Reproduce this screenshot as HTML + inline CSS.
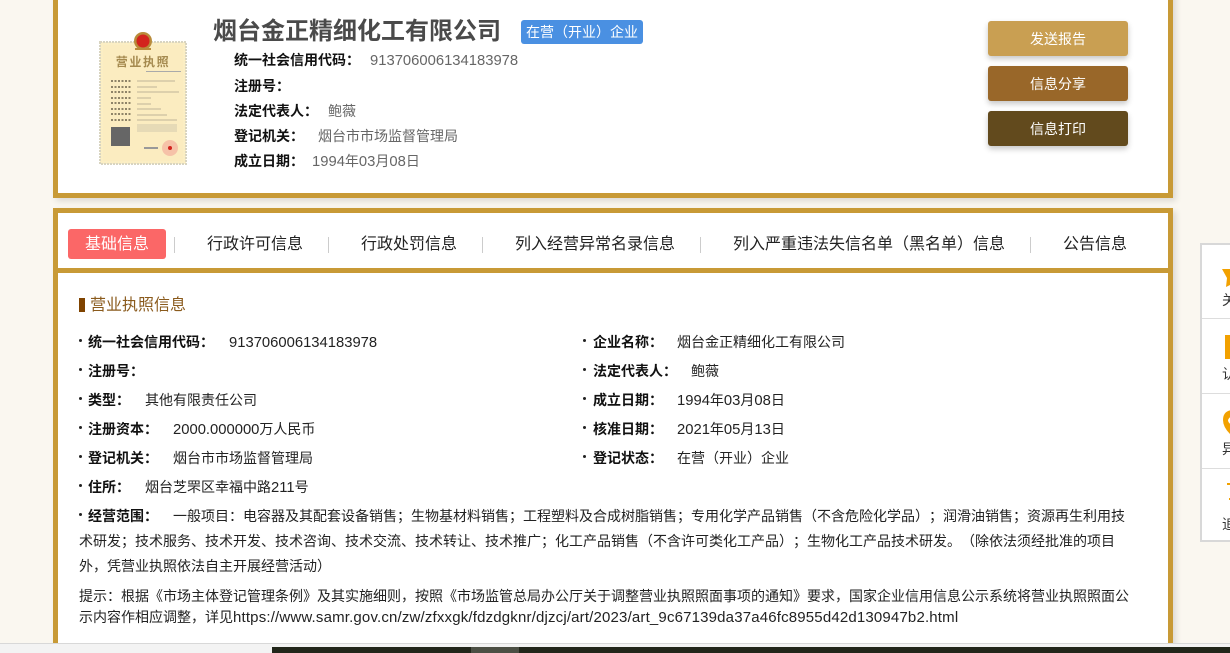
<!DOCTYPE html>
<html lang="zh"><head><meta charset="utf-8"><style>
html,body{margin:0;padding:0;width:1230px;height:653px;overflow:hidden}
body{position:relative;background:#faf7f0;font-family:"Liberation Sans","Noto Sans CJK SC",sans-serif;font-size:14px;color:#222;text-spacing-trim:space-all}
.a{position:absolute;white-space:nowrap;line-height:20px}
.card{position:absolute;left:53px;width:1110px;border:5px solid #c89a36;background:#fff;box-shadow:3px 3px 6px rgba(0,0,0,.12)}
b{font-weight:700;color:#111}
.g{color:#666}
.n{font-size:14.8px}
.u{font-size:15px;letter-spacing:.17px}
.btn{position:absolute;left:988px;width:140px;height:35px;border-radius:3px;color:#fff;text-align:center;line-height:37px;font-size:14px;box-shadow:0 3px 6px rgba(0,0,0,.22)}
.sep{position:absolute;top:237px;width:1px;height:16px;background:#ccc}
.nav{position:absolute;top:235px;line-height:20px;font-size:16px;color:#222;white-space:nowrap}
.dot{position:absolute;left:79px;width:3px;height:3px;background:#222;border-radius:50%}
.dot2{left:583px}
.t{position:absolute;white-space:nowrap;line-height:20px;font-size:14px;color:#222}
.side{position:absolute;left:1200px;top:243px;width:30px;height:299px;background:#fff;border:2px solid #d8d8d8;border-right:0;box-sizing:border-box;overflow:hidden}
.side i{position:absolute;left:0;width:40px;height:1px;background:#ddd}
.side span{position:absolute;left:20px;font-size:14px;line-height:16px;color:#333;white-space:nowrap}
</style></head><body>

<div class="card" style="top:-10px;height:198px"></div>
<div class="card" style="top:208px;height:445px;border-bottom:0"></div>
<div style="position:absolute;left:58px;top:268px;width:1110px;height:5px;background:#c89a36"></div>

<svg style="position:absolute;left:99px;top:30px;filter:blur(.35px)" width="90" height="136" viewBox="0 0 90 136">
<rect x="1" y="12" width="86" height="122" fill="#fbeec4" stroke="#d8d4c0" stroke-width="2" stroke-dasharray="2 1"/>
<rect x="4" y="15" width="80" height="116" fill="#fbecc0"/>
<circle cx="44" cy="11" r="9" fill="#b98b3a"/><circle cx="44" cy="11" r="6.5" fill="#d3241d"/><rect x="36" y="18" width="16" height="2" fill="#b98b3a"/>
<text x="44" y="36" text-anchor="middle" font-size="12" font-weight="700" fill="#a58a4f" letter-spacing="1.6" font-family="Noto Sans CJK SC,sans-serif">营业执照</text>
<g stroke="#8f8468" stroke-width="2" stroke-dasharray="2 1.5" fill="none"><path d="M12 51H33M12 57H33M12 62H33M12 68H33M12 73H33M12 79H33M12 84H33M12 90H33"/></g>
<g fill="#ddd0ac"><rect x="38" y="50" width="38" height="2"/><rect x="38" y="56" width="20" height="2"/><rect x="38" y="61" width="42" height="2"/><rect x="38" y="67" width="14" height="2"/><rect x="38" y="73" width="14" height="2"/><rect x="38" y="78" width="24" height="2"/><rect x="38" y="84" width="30" height="2"/><rect x="38" y="89" width="40" height="2"/><rect x="38" y="94" width="40" height="8" fill="#e6dab6"/></g>
<rect x="47" y="41" width="35" height="1" fill="#aaa"/>
<rect x="12" y="97" width="19" height="19" fill="#666"/>
<circle cx="71" cy="118" r="8" fill="#f6c2a8"/><circle cx="71" cy="118" r="2" fill="#d3241d"/>
<rect x="45" y="117" width="14" height="2" fill="#999"/>
</svg>

<div class="a" style="left:213px;top:16px;font-size:24px;line-height:32px;font-weight:700;color:#4a4a4a">烟台金正精细化工有限公司</div>
<div class="a" style="left:521px;top:20px;width:122px;height:24px;line-height:25px;background:#4a90e2;color:#fff;border-radius:3px;text-align:center;font-size:14px">在营（开业）企业</div>

<div class="a" style="left:234px;top:50px"><b>统一社会信用代码：</b></div><div class="a g" style="left:370px;top:50px"><span class="n">913706006134183978</span></div>
<div class="a" style="left:234px;top:76px"><b>注册号：</b></div>
<div class="a" style="left:234px;top:101px"><b>法定代表人：</b></div><div class="a g" style="left:328px;top:101px">鲍薇</div>
<div class="a" style="left:234px;top:126px"><b>登记机关：</b></div><div class="a g" style="left:318px;top:126px">烟台市市场监督管理局</div>
<div class="a" style="left:234px;top:151px"><b>成立日期：</b></div><div class="a g" style="left:312px;top:151px"><span class="n">1994</span>年<span class="n">03</span>月<span class="n">08</span>日</div>

<div class="btn" style="top:21px;background:#c99f52">发送报告</div>
<div class="btn" style="top:66px;background:#996729">信息分享</div>
<div class="btn" style="top:111px;background:#624a1d">信息打印</div>

<div style="position:absolute;left:68px;top:229px;width:98px;height:30px;background:#fb6767;border-radius:3px;color:#fff;font-size:16px;line-height:31px;text-align:center">基础信息</div>
<div class="sep" style="left:174px"></div>
<div class="nav" style="left:207px">行政许可信息</div>
<div class="sep" style="left:328px"></div>
<div class="nav" style="left:361px">行政处罚信息</div>
<div class="sep" style="left:482px"></div>
<div class="nav" style="left:515px">列入经营异常名录信息</div>
<div class="sep" style="left:700px"></div>
<div class="nav" style="left:733px">列入严重违法失信名单（黑名单）信息</div>
<div class="sep" style="left:1030px"></div>
<div class="nav" style="left:1063px">公告信息</div>

<div style="position:absolute;left:79px;top:298px;width:6px;height:14px;background:#7f4300"></div>
<div class="a" style="left:90px;top:296px;font-size:16px;color:#8a5a1c;line-height:20px">营业执照信息</div>

<div class="dot" style="top:339px"></div><div class="t" style="left:88px;top:332px"><b>统一社会信用代码：</b></div><div class="t" style="left:229px;top:332px"><span class="n">913706006134183978</span></div>
<div class="dot" style="top:368px"></div><div class="t" style="left:88px;top:361px"><b>注册号：</b></div>
<div class="dot" style="top:397px"></div><div class="t" style="left:88px;top:390px"><b>类型：</b></div><div class="t" style="left:145px;top:390px">其他有限责任公司</div>
<div class="dot" style="top:426px"></div><div class="t" style="left:88px;top:419px"><b>注册资本：</b></div><div class="t" style="left:173px;top:419px"><span class="n">2000.000000</span>万人民币</div>
<div class="dot" style="top:455px"></div><div class="t" style="left:88px;top:448px"><b>登记机关：</b></div><div class="t" style="left:173px;top:448px">烟台市市场监督管理局</div>
<div class="dot" style="top:484px"></div><div class="t" style="left:88px;top:477px"><b>住所：</b></div><div class="t" style="left:145px;top:477px">烟台芝罘区幸福中路<span class="n">211</span>号</div>

<div class="dot dot2" style="top:339px"></div><div class="t" style="left:593px;top:332px"><b>企业名称：</b></div><div class="t" style="left:677px;top:332px">烟台金正精细化工有限公司</div>
<div class="dot dot2" style="top:368px"></div><div class="t" style="left:593px;top:361px"><b>法定代表人：</b></div><div class="t" style="left:691px;top:361px">鲍薇</div>
<div class="dot dot2" style="top:397px"></div><div class="t" style="left:593px;top:390px"><b>成立日期：</b></div><div class="t" style="left:677px;top:390px"><span class="n">1994</span>年<span class="n">03</span>月<span class="n">08</span>日</div>
<div class="dot dot2" style="top:426px"></div><div class="t" style="left:593px;top:419px"><b>核准日期：</b></div><div class="t" style="left:677px;top:419px"><span class="n">2021</span>年<span class="n">05</span>月<span class="n">13</span>日</div>
<div class="dot dot2" style="top:455px"></div><div class="t" style="left:593px;top:448px"><b>登记状态：</b></div><div class="t" style="left:677px;top:448px">在营（开业）企业</div>

<div class="dot" style="top:513px"></div>
<div class="t" style="left:88px;top:506px"><b>经营范围：</b></div>
<div class="t" style="left:173px;top:506px">一般项目：电容器及其配套设备销售；生物基材料销售；工程塑料及合成树脂销售；专用化学产品销售（不含危险化学品）；润滑油销售；资源再生利用技</div>
<div class="t" style="left:79px;top:531px">术研发；技术服务、技术开发、技术咨询、技术交流、技术转让、技术推广；化工产品销售（不含许可类化工产品）；生物化工产品技术研发。（除依法须经批准的项目</div>
<div class="t" style="left:79px;top:556px">外，凭营业执照依法自主开展经营活动）</div>
<div class="t" style="left:79px;top:586px">提示：根据《市场主体登记管理条例》及其实施细则，按照《市场监管总局办公厅关于调整营业执照照面事项的通知》要求，国家企业信用信息公示系统将营业执照照面公</div>
<div class="t" style="left:79px;top:607px">示内容作相应调整，详见<span class="u">https://www.samr.gov.cn/zw/zfxxgk/fdzdgknr/djzcj/art/2023/art_9c67139da37a46fc8955d42d130947b2.html</span></div>

<div class="side">
<i style="top:73px"></i><i style="top:148px"></i><i style="top:223px"></i>
<svg style="position:absolute;left:20px;top:20px" width="10" height="240" viewBox="0 0 10 240">
<path d="M0 4 L10 4 L10 19 L4 22 L5 13 Z" fill="#f2a100"/>
<rect x="3" y="70" width="7" height="24" fill="#f2a100"/>
<path d="M10 145 Q1 146 1 155 Q1 162 8 169 L10 169 L10 160 Q6 158 6 155 Q8 151 10 152 Z" fill="#f2a100"/>
<rect x="5" y="218" width="5" height="2" fill="#f2a100"/><rect x="7" y="233" width="3" height="2" fill="#f2a100"/>
</svg>
<span style="top:47px">关</span><span style="top:121px">认</span><span style="top:196px">异</span><span style="top:271px">追</span>
</div>

<div style="position:absolute;left:0;top:643px;width:1230px;height:10px;background:#f3f3f3;border-top:1px solid #d8d8d8;box-sizing:border-box"></div>
<div style="position:absolute;left:272px;top:647px;width:958px;height:6px;background:#22261a"></div>
<div style="position:absolute;left:471px;top:647px;width:48px;height:6px;background:#4c4f44"></div>
</body></html>
